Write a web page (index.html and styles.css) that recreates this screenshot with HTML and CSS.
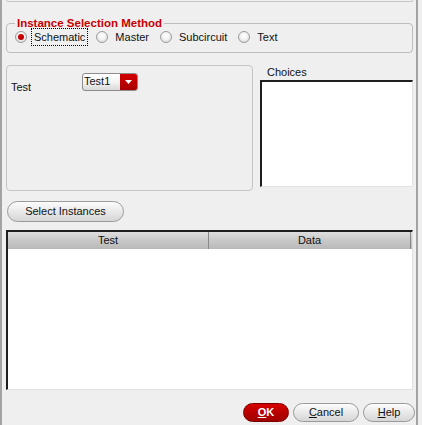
FILE: index.html
```html
<!DOCTYPE html>
<html>
<head>
<meta charset="utf-8">
<link rel="stylesheet" href="styles.css">
</head>
<body>
<div class="window">
  <div class="prev-frame"></div>
  <fieldset class="method">
    <legend>Instance Selection Method</legend>
    <div class="radios">
      <div class="opt"><span class="radio checked"></span><span class="opt-label focus">Schematic</span></div>
      <div class="opt"><span class="radio"></span><span class="opt-label">Master</span></div>
      <div class="opt"><span class="radio"></span><span class="opt-label">Subcircuit</span></div>
      <div class="opt"><span class="radio"></span><span class="opt-label">Text</span></div>
    </div>
  </fieldset>
  <div class="row">
    <div class="panel">
      <span class="panel-label">Test</span>
      <div class="dropdown">
        <span class="dd-text">Test1</span>
        <span class="dd-btn"><svg width="7" height="4" viewBox="0 0 7 4"><path d="M0 0H7L3.5 4Z" fill="#fff"/></svg></span>
      </div>
    </div>
    <div class="choices">
      <div class="choices-label">Choices</div>
      <div class="listbox"></div>
    </div>
  </div>
  <div class="select-btn">Select Instances</div>
  <div class="table">
    <div class="thead">
      <div class="th">Test</div>
      <div class="th">Data</div>
    </div>
  </div>
  <div class="footer">
    <div class="btn ok"><u>O</u>K</div>
    <div class="btn cancel"><u>C</u>ancel</div>
    <div class="btn help"><u>H</u>elp</div>
  </div>
</div>
</body>
</html>
```
FILE: styles.css
```css
* { box-sizing: border-box; }
html, body { margin: 0; padding: 0; }
body {
  background: #efefef;
  font-family: "Liberation Sans", Arial, sans-serif;
  font-size: 11px;
  color: #111;
  width: 422px;
  height: 425px;
  overflow: hidden;
}
.window {
  width: 418px;
  height: 425px;
  border-left: 2px solid #a3a3a3;
  border-right: 2px solid #a3a3a3;
  padding: 0 3px 0 4px;
  display: flex;
  flex-direction: column;
}
.prev-frame {
  height: 2px;
  border: 1px solid #c6c6c6;
  border-top: none;
  border-radius: 0 0 4px 4px;
  flex: none;
}
.method {
  margin: 15px 0 0 0;
  padding: 0 8px 6px 8px;
  border: 1px solid #bdbdbd;
  border-radius: 4px;
  min-width: 0;
  flex: none;
}
.method legend {
  padding: 0 2px;
  margin: 0;
  color: #c80000;
  font-weight: bold;
  font-size: 11.5px;
  line-height: 13px;
}
.radios {
  display: flex;
  align-items: center;
  height: 18px;
  margin-top: -2px;
}
.opt {
  display: flex;
  align-items: center;
  margin-right: 8px;
}
.radio {
  width: 12px;
  height: 12px;
  border-radius: 50%;
  border: 1px solid #9c9c9c;
  background: radial-gradient(circle at 50% 40%, #ffffff 0%, #f2f2f2 45%, #cfcfcf 100%);
  margin-right: 4px;
  display: flex;
  align-items: center;
  justify-content: center;
}
.radio.checked::after {
  content: "";
  width: 6px;
  height: 6px;
  border-radius: 50%;
  background: radial-gradient(circle at 40% 40%, #e00000, #a00000);
}
.opt-label {
  border: 1px solid transparent;
  padding: 2px 2px;
  line-height: 12px;
}
.opt-label.focus {
  border: 1px dotted #000;
}
.row {
  display: flex;
  margin-top: 12px;
  height: 126px;
  flex: none;
}
.panel {
  width: 247px;
  border: 1px solid #c4c4c4;
  border-radius: 4px;
  padding: 7px 4px;
  display: flex;
  align-items: flex-start;
}
.panel-label {
  width: 71px;
  margin-top: 8px;
  line-height: 13px;
}
.dropdown {
  width: 56px;
  height: 18px;
  border: 1px solid #8c8c8c;
  border-radius: 3px;
  display: flex;
  overflow: hidden;
  background: linear-gradient(#ffffff, #f4f4f4 50%, #d8d8d8);
}
.dd-text {
  flex: 1;
  padding-left: 1px;
  line-height: 15px;
}
.dd-btn {
  width: 17px;
  background: linear-gradient(#d40000, #a80000);
  display: flex;
  align-items: center;
  justify-content: center;
}
.choices {
  margin-left: 7px;
  flex: 1;
  display: flex;
  flex-direction: column;
}
.choices-label {
  padding-left: 7px;
  line-height: 13px;
  height: 15px;
  padding-top: 1px;
}
.listbox {
  height: 107px;
  background: #fff;
  border-top: 2px solid #1e1e1e;
  border-left: 2px solid #1e1e1e;
  border-right: 1px solid #e2e2e2;
  border-bottom: 1px solid #e2e2e2;
}
.select-btn {
  margin-top: 10px;
  margin-left: 1px;
  width: 117px;
  height: 21px;
  border: 1px solid #9a9a9a;
  border-radius: 11px;
  background: linear-gradient(#fcfcfc, #e9e9e9 50%, #d6d6d6);
  text-align: center;
  line-height: 19px;
  flex: none;
}
.table {
  margin-top: 8px;
  height: 160px;
  background: #fff;
  border-top: 2px solid #1e1e1e;
  border-left: 2px solid #1e1e1e;
  border-right: 1px solid #e0e0e0;
  border-bottom: 1px solid #e0e0e0;
  flex: none;
}
.thead {
  display: grid;
  grid-template-columns: 201px 202px;
  height: 17px;
  background: linear-gradient(#dedede, #c8c8c8 50%, #b9b9b9);
}
.th {
  border-right: 1px solid #888;
  text-align: center;
  line-height: 17px;
}
.footer {
  margin-top: auto;
  margin-right: -2px;
  padding-bottom: 3px;
  display: flex;
  justify-content: flex-end;
  gap: 4px;
}
.btn {
  height: 19px;
  border-radius: 10px;
  border: 1px solid #9a9a9a;
  background: linear-gradient(#fcfcfc, #e9e9e9 50%, #d6d6d6);
  text-align: center;
  line-height: 17px;
}
.btn.ok {
  width: 46px;
  background: linear-gradient(#d80000, #b80000 50%, #a00000);
  border-color: #7a0000;
  color: #fff;
  font-weight: bold;
}
.btn.cancel { width: 66px; }
.btn.help { width: 52px; }
```
